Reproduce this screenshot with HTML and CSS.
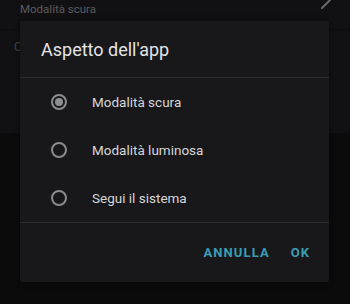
FILE: index.html
```html
<!DOCTYPE html>
<html lang="it">
<head>
<meta charset="utf-8">
<link rel="stylesheet" href="styles.css">
</head>
<body>
<div class="screen">
  <div class="bg-card">
    <div class="bg-row bg-top">
      <span class="bg-label">Modalità scura</span>
      <svg class="bg-pencil" width="12" height="12" viewBox="0 0 12 12"><path d="M2 10 L10 2" stroke="#6a6a6a" stroke-width="2" stroke-linecap="round"/></svg>
    </div>
    <div class="bg-row bg-second"><span class="bg-c">C</span></div>
    <div class="bg-row bg-third"></div>
  </div>
  <div class="bg-rest"></div>
</div>

<div class="dialog">
  <div class="dialog-header">
    <h1 class="dialog-title">Aspetto dell'app</h1>
  </div>
  <div class="dialog-list">
    <div class="option">
      <span class="radio checked"><span class="dot"></span></span>
      <span class="option-label">Modalità scura</span>
    </div>
    <div class="option">
      <span class="radio"></span>
      <span class="option-label">Modalità luminosa</span>
    </div>
    <div class="option">
      <span class="radio"></span>
      <span class="option-label">Segui il sistema</span>
    </div>
  </div>
  <div class="dialog-actions">
    <span class="btn">ANNULLA</span>
    <span class="btn">OK</span>
  </div>
</div>
</body>
</html>
```

FILE: styles.css
```css
html, body {
  margin: 0;
  padding: 0;
}
body {
  width: 350px;
  height: 304px;
  background: #0b0b0c;
  font-family: Roboto, "Liberation Sans", sans-serif;
  overflow: hidden;
  position: relative;
}
.screen {
  display: flex;
  flex-direction: column;
  height: 304px;
}
.bg-card {
  background: #111113;
  height: 133px;
  display: flex;
  flex-direction: column;
}
.bg-row {
  display: flex;
  align-items: center;
  padding: 0 20px;
}
.bg-top {
  height: 29px;
  justify-content: space-between;
  align-items: flex-start;
  border-bottom: 1px solid #0d0d0e;
  padding-right: 18px;
}
.bg-label {
  color: #5c5c5e;
  font-size: 11.5px;
  line-height: 16px;
  margin-top: 1px;
}
.bg-pencil {
  margin-top: -2px;
}
.bg-second {
  height: 34px;
  padding-left: 14px;
}
.bg-c {
  color: #444446;
  font-size: 12px;
}
.bg-third {
  flex: 1;
}
.bg-rest {
  flex: 1;
}

.dialog {
  position: absolute;
  left: 20px;
  top: 21px;
  width: 309px;
  height: 261px;
  background: #18181b;
  border-radius: 2px;
  display: flex;
  flex-direction: column;
  box-shadow: 0 0 6px rgba(0,0,0,0.5);
}
.dialog-header {
  height: 57px;
  border-bottom: 1px solid #2c2c30;
  display: flex;
  align-items: flex-start;
  padding-left: 21px;
  box-sizing: border-box;
}
.dialog-title {
  margin: 17px 0 0 0;
  font-size: 18px;
  font-weight: 400;
  line-height: 24px;
  color: #e4e4e6;
}
.dialog-list {
  display: flex;
  flex-direction: column;
  border-bottom: 1px solid #2c2c30;
}
.option {
  height: 48px;
  display: flex;
  align-items: center;
  padding-left: 31px;
}
.radio {
  width: 16px;
  height: 16px;
  box-sizing: border-box;
  border: 2px solid #8a8b8d;
  border-radius: 50%;
  display: flex;
  align-items: center;
  justify-content: center;
  margin-top: -1px;
}
.radio .dot {
  width: 8px;
  height: 8px;
  border-radius: 50%;
  background: #8e9092;
}
.option-label {
  margin-left: 25px;
  font-size: 13.5px;
  color: #d6d6d8;
}
.dialog-actions {
  flex: 1;
  display: flex;
  justify-content: flex-end;
  align-items: center;
  gap: 22px;
  padding-right: 20px;
}
.btn {
  color: #3a9db3;
  font-size: 13px;
  font-weight: 700;
  letter-spacing: 1.1px;
  margin-right: -1.1px;
}
```
